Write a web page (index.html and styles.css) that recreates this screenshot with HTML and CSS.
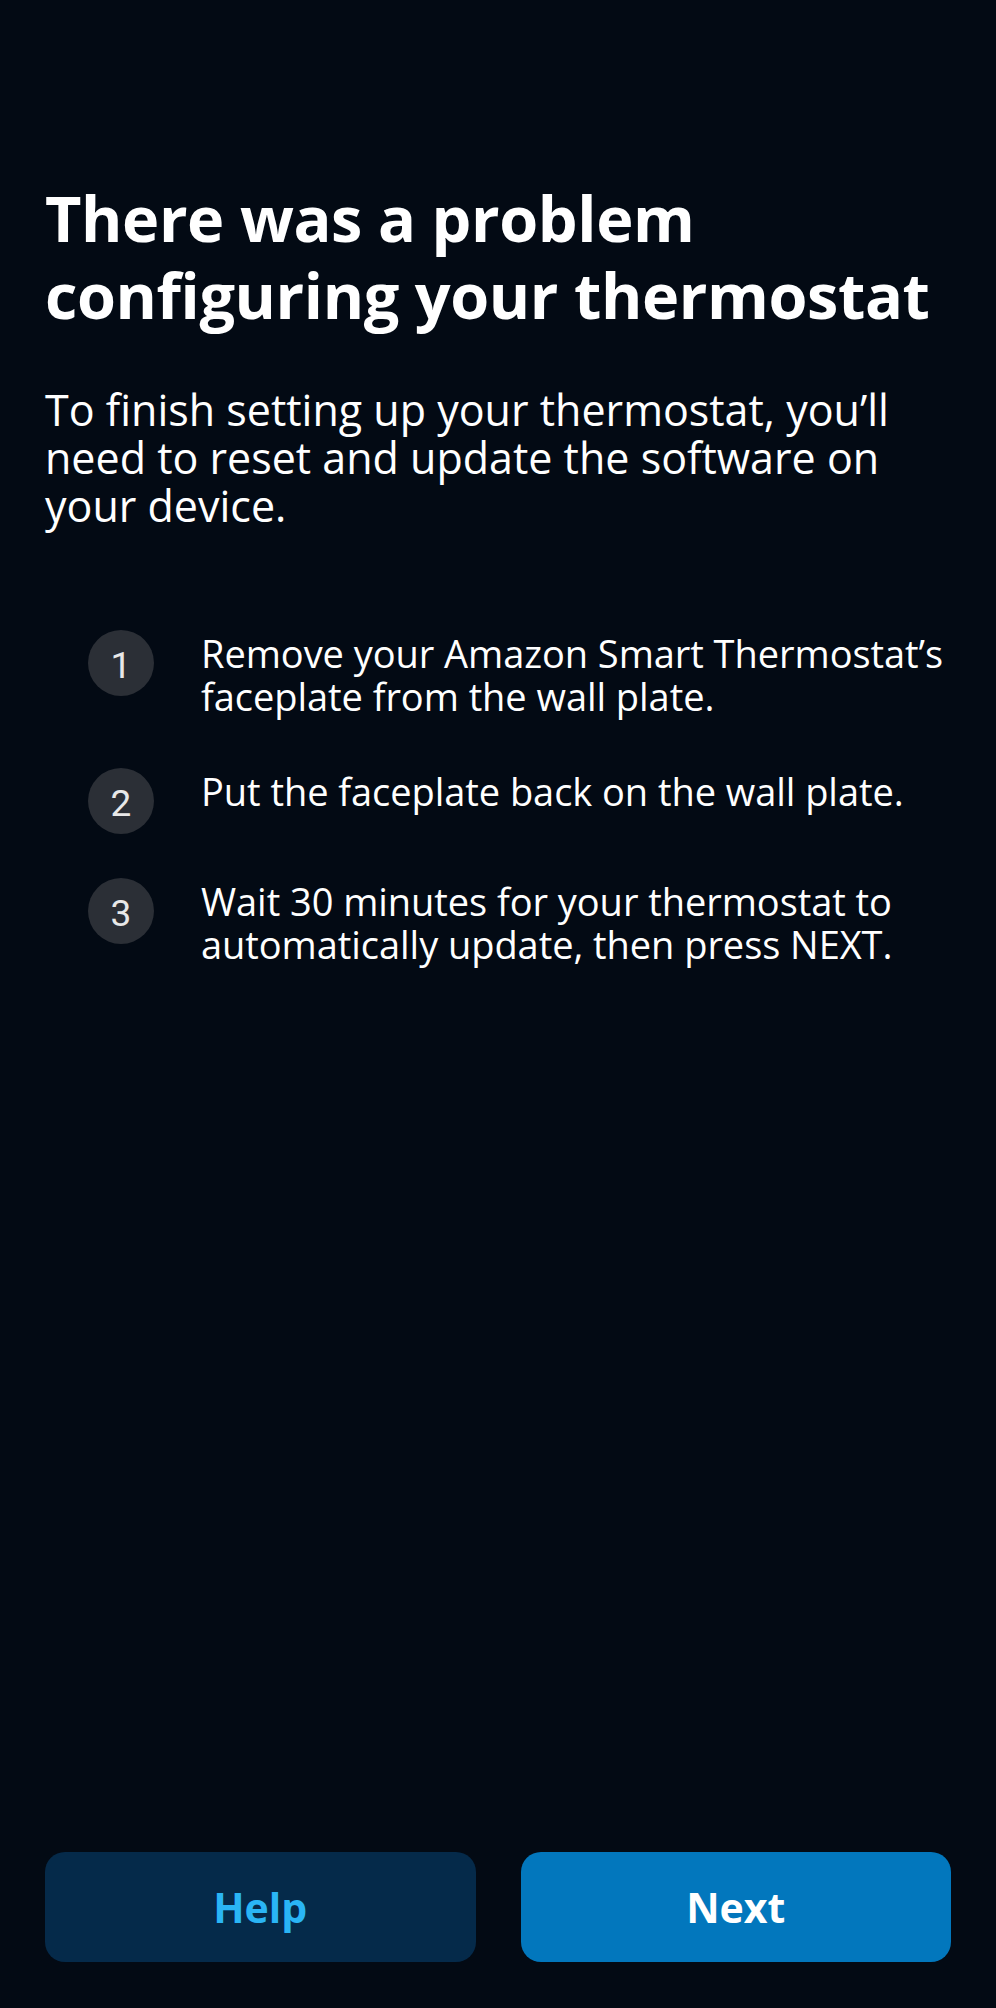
FILE: index.html
```html
<!DOCTYPE html>
<html lang="en">
<head>
<meta charset="utf-8">
<title>Thermostat setup problem</title>
<link rel="stylesheet" href="styles.css">
</head>
<body>
<div class="screen">
  <main class="content">
    <h1 class="title">There was a problem configuring your thermostat</h1>
    <p class="lead">To finish setting up your thermostat, you’ll need to reset and update the software on your device.</p>
    <ol class="steps">
      <li class="step"><span class="num">1</span><span class="step-text">Remove your Amazon Smart Thermostat’s faceplate from the wall plate.</span></li>
      <li class="step"><span class="num">2</span><span class="step-text">Put the faceplate back on the wall plate.</span></li>
      <li class="step"><span class="num">3</span><span class="step-text">Wait 30 minutes for your thermostat to automatically update, then press NEXT.</span></li>
    </ol>
  </main>
  <footer class="actions">
    <button class="btn btn-help">Help</button>
    <button class="btn btn-next">Next</button>
  </footer>
</div>
</body>
</html>
```

FILE: styles.css
```css
html, body {
  margin: 0;
  padding: 0;
  background: #030a14;
}
body {
  font-family: "Open Sans", "Noto Sans", sans-serif;
  color: #ffffff;
}
.screen {
  width: 996px;
  height: 2008px;
  display: flex;
  flex-direction: column;
  box-sizing: border-box;
  padding: 0 45px 46px;
}
.content {
  flex: 1;
  padding-top: 179px;
}
.title {
  margin: 0;
  font-size: 63px;
  line-height: 77px;
  font-weight: 700;
  letter-spacing: -0.4px;
}
.lead {
  margin: 53px 0 0;
  font-size: 43px;
  line-height: 48px;
  font-weight: 400;
  letter-spacing: 0;
}
.steps {
  list-style: none;
  margin: 100px -30px 0 0;
  padding: 0 0 0 43px;
  display: flex;
  flex-direction: column;
  gap: 44px;
}
.step {
  display: flex;
  align-items: flex-start;
  gap: 47px;
}
.num {
  flex: none;
  width: 66px;
  height: 66px;
  box-sizing: border-box;
  padding-top: 4px;
  border-radius: 50%;
  background: #2b2f36;
  display: flex;
  align-items: center;
  justify-content: center;
  font-family: "Roboto", sans-serif;
  font-size: 37px;
  color: #e8e8e8;
}
.step-text {
  padding: 2px 0 6px;
  font-size: 38px;
  line-height: 43px;
  letter-spacing: -0.05px;
}
.actions {
  display: flex;
  gap: 45px;
}
.btn {
  flex: 1;
  height: 110px;
  border: none;
  border-radius: 20px;
  font-family: "Open Sans", "Noto Sans", sans-serif;
  font-size: 41px;
  font-weight: 700;
}
.btn-help {
  background: #052a4a;
  color: #2ab5f5;
}
.btn-next {
  background: #0277bd;
  color: #ffffff;
}
```
